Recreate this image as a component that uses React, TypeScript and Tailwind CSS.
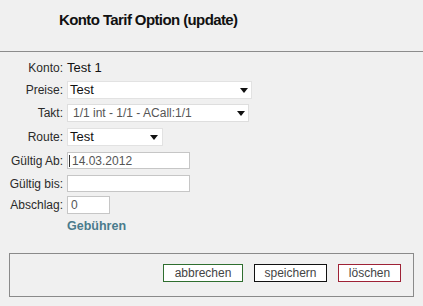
import React from "react";

function Arrow() {
  return (
    <svg width="8" height="5" viewBox="0 0 8 5" className="shrink-0">
      <polygon points="0,0 8,0 4,5" fill="#111" />
    </svg>
  );
}

function Row({
  label,
  className,
  children,
}: {
  label: string;
  className: string;
  children: React.ReactNode;
}) {
  return (
    <div className={`flex items-center ${className}`}>
      <div className="w-[63px] text-right text-[12px] leading-[14px] text-[#2a2a2a] whitespace-nowrap">
        {label}
      </div>
      <div className="ml-[4px] flex h-full items-center">{children}</div>
    </div>
  );
}

export default function App() {
  return (
    <div className="w-[423px] h-[306px] bg-[#f0f0f0] font-['Liberation_Sans',Arial,sans-serif] text-black overflow-hidden">
      <div className="h-[52px] border-b border-[#8c8c8c] pl-[59px] pt-[11px]">
        <h1 className="text-[15px] leading-[18px] font-bold tracking-[-0.6px] text-[#111]">
          Konto Tarif Option (update)
        </h1>
      </div>

      <div className="flex flex-col">
        <Row label="Konto:" className="mt-[7px] h-[18px]">
          <span className="text-[13px] leading-[16px] text-[#111]">Test 1</span>
        </Row>

        <Row label="Preise:" className="mt-[4px] h-[18px]">
          <div className="flex h-[18px] w-[185px] items-center justify-between border border-[#e2e2e2] bg-white pl-[2px] pr-[3px]">
            <span className="text-[13px] leading-[16px] text-[#111]">Test</span>
            <Arrow />
          </div>
        </Row>

        <Row label="Takt:" className="mt-[5px] h-[18px]">
          <div className="flex h-[18px] w-[182px] items-center justify-between border border-[#dedede] bg-white pl-[5px] pr-[3px]">
            <span className="text-[12px] leading-[14px] text-[#555]">
              1/1 int - 1/1 - ACall:1/1
            </span>
            <Arrow />
          </div>
        </Row>

        <Row label="Route:" className="mt-[6px] h-[18px]">
          <div className="flex h-[18px] w-[96px] items-center justify-between border border-[#e2e2e2] bg-white pl-[2px] pr-[4px]">
            <span className="text-[13px] leading-[16px] text-[#111]">Test</span>
            <Arrow />
          </div>
        </Row>

        <Row label="Gültig Ab:" className="mt-[6px] h-[17px]">
          <div className="flex h-[17px] w-[123px] items-center border border-[#c6c6c6] bg-white pl-[1px]">
            <span className="h-[12px] w-px bg-[#333]" />
            <span className="ml-[2px] text-[12px] leading-[14px] text-[#555]">14.03.2012</span>
          </div>
        </Row>

        <Row label="Gültig bis:" className="mt-[6px] h-[17px]">
          <div className="h-[17px] w-[123px] border border-[#c6c6c6] bg-white" />
        </Row>

        <Row label="Abschlag:" className="mt-[4px] h-[18px]">
          <div className="flex h-[18px] w-[43px] items-center border border-[#c6c6c6] bg-white pl-[3px]">
            <span className="text-[12px] leading-[14px] text-[#555]">0</span>
          </div>
        </Row>

        <div className="mt-[5px] flex h-[14px] items-center pl-[67px]">
          <span className="text-[12.5px] leading-[14px] font-bold text-[#4a7b8c]">Gebühren</span>
        </div>

        <div className="mx-[9px] mt-[20px] h-[44px] border border-[#8a8a8a]">
          <div className="flex justify-end gap-[11px] pt-[10px] pr-[12px]">
            <div className="flex h-[18px] w-[80px] items-center justify-center border border-[#2f6e2f] bg-white text-[12px] leading-[14px] text-[#444]">
              abbrechen
            </div>
            <div className="flex h-[18px] w-[73px] items-center justify-center border border-[#111] bg-white text-[12px] leading-[14px] text-[#444]">
              speichern
            </div>
            <div className="flex h-[18px] w-[63px] items-center justify-center border border-[#9e2236] bg-white text-[12px] leading-[14px] text-[#444]">
              löschen
            </div>
          </div>
        </div>
      </div>
    </div>
  );
}
